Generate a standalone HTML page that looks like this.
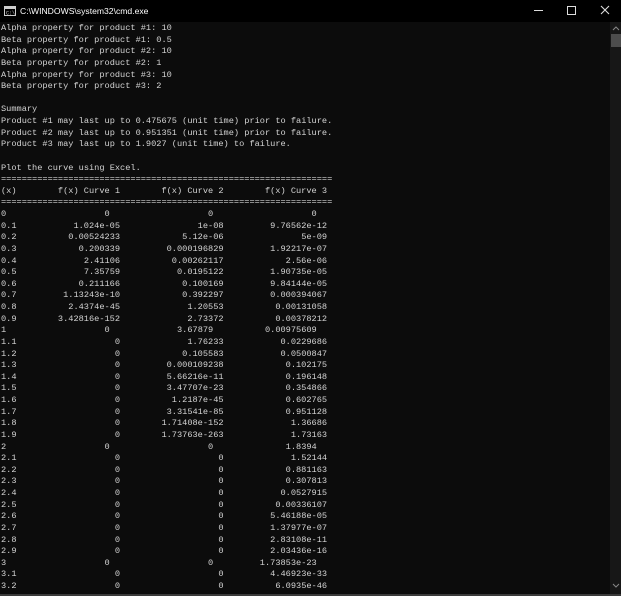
<!DOCTYPE html>
<html><head><meta charset="utf-8"><style>
html,body{margin:0;padding:0;width:621px;height:596px;overflow:hidden;background:#0c0c0c;}
#title{position:absolute;left:0;top:0;width:621px;height:22px;background:#000;color:#fff;font:8.6px "Liberation Sans",sans-serif;}
#title .t{position:absolute;left:20px;top:6px;}
#con{position:absolute;left:1px;top:23px;width:608px;height:571px;overflow:hidden;}
pre,.r{font-family:"Liberation Mono",monospace;font-size:8.65px;line-height:11.62px;color:#d4d4d4;margin:0;white-space:pre;}
.r b{display:inline-block;width:20ch;text-align:right;font-weight:normal;}
#sb{position:absolute;left:610px;top:22px;width:11px;height:572px;background:#171717;}
#thumb{position:absolute;left:1px;top:12px;width:10px;height:13px;background:#4d4d4d;}
#bot{position:absolute;left:0;top:594px;width:621px;height:2px;background:#3a3a3a;}
</style></head><body>
<div id="title">
<svg style="position:absolute;left:4px;top:6px" width="12" height="10"><rect x="0.5" y="0.5" width="11" height="9" fill="#000" stroke="#ccc"/><rect x="1" y="1" width="10" height="2" fill="#ccc"/><text x="2" y="8.5" font-size="5" fill="#ccc" font-family="Liberation Mono">C:\</text></svg>
<span class="t">C:\WINDOWS\system32\cmd.exe</span>
<div style="position:absolute;left:534px;top:10px;width:9px;height:1px;background:#ddd"></div>
<div style="position:absolute;left:567px;top:6px;width:7px;height:7px;border:1px solid #ddd"></div>
<svg style="position:absolute;left:600px;top:5px" width="10" height="10"><path d="M1 1L9 9M9 1L1 9" stroke="#ddd" stroke-width="1.1"/></svg>
</div>
<div id="con">
<pre>Alpha property for product #1: 10
Beta property for product #1: 0.5
Alpha property for product #2: 10
Beta property for product #2: 1
Alpha property for product #3: 10
Beta property for product #3: 2

Summary
Product #1 may last up to 0.475675 (unit time) prior to failure.
Product #2 may last up to 0.951351 (unit time) prior to failure.
Product #3 may last up to 1.9027 (unit time) to failure.

Plot the curve using Excel.
================================================================</pre>
<div class="r">(x)<b>f(x) Curve 1</b><b>f(x) Curve 2</b><b>f(x) Curve 3</b></div>
<pre>================================================================</pre>
<div class="r">0<b>0</b><b>0</b><b>0</b></div>
<div class="r">0.1<b>1.024e-05</b><b>1e-08</b><b>9.76562e-12</b></div>
<div class="r">0.2<b>0.00524233</b><b>5.12e-06</b><b>5e-09</b></div>
<div class="r">0.3<b>0.200339</b><b>0.000196829</b><b>1.92217e-07</b></div>
<div class="r">0.4<b>2.41106</b><b>0.00262117</b><b>2.56e-06</b></div>
<div class="r">0.5<b>7.35759</b><b>0.0195122</b><b>1.90735e-05</b></div>
<div class="r">0.6<b>0.211166</b><b>0.100169</b><b>9.84144e-05</b></div>
<div class="r">0.7<b>1.13243e-10</b><b>0.392297</b><b>0.000394067</b></div>
<div class="r">0.8<b>2.4374e-45</b><b>1.20553</b><b>0.00131058</b></div>
<div class="r">0.9<b>3.42816e-152</b><b>2.73372</b><b>0.00378212</b></div>
<div class="r">1<b>0</b><b>3.67879</b><b>0.00975609</b></div>
<div class="r">1.1<b>0</b><b>1.76233</b><b>0.0229686</b></div>
<div class="r">1.2<b>0</b><b>0.105583</b><b>0.0500847</b></div>
<div class="r">1.3<b>0</b><b>0.000109238</b><b>0.102175</b></div>
<div class="r">1.4<b>0</b><b>5.66216e-11</b><b>0.196148</b></div>
<div class="r">1.5<b>0</b><b>3.47707e-23</b><b>0.354866</b></div>
<div class="r">1.6<b>0</b><b>1.2187e-45</b><b>0.602765</b></div>
<div class="r">1.7<b>0</b><b>3.31541e-85</b><b>0.951128</b></div>
<div class="r">1.8<b>0</b><b>1.71408e-152</b><b>1.36686</b></div>
<div class="r">1.9<b>0</b><b>1.73763e-263</b><b>1.73163</b></div>
<div class="r">2<b>0</b><b>0</b><b>1.8394</b></div>
<div class="r">2.1<b>0</b><b>0</b><b>1.52144</b></div>
<div class="r">2.2<b>0</b><b>0</b><b>0.881163</b></div>
<div class="r">2.3<b>0</b><b>0</b><b>0.307813</b></div>
<div class="r">2.4<b>0</b><b>0</b><b>0.0527915</b></div>
<div class="r">2.5<b>0</b><b>0</b><b>0.00336107</b></div>
<div class="r">2.6<b>0</b><b>0</b><b>5.46188e-05</b></div>
<div class="r">2.7<b>0</b><b>0</b><b>1.37977e-07</b></div>
<div class="r">2.8<b>0</b><b>0</b><b>2.83108e-11</b></div>
<div class="r">2.9<b>0</b><b>0</b><b>2.03436e-16</b></div>
<div class="r">3<b>0</b><b>0</b><b>1.73853e-23</b></div>
<div class="r">3.1<b>0</b><b>0</b><b>4.46923e-33</b></div>
<div class="r">3.2<b>0</b><b>0</b><b>6.0935e-46</b></div>
</div>
<div id="sb">
<svg style="position:absolute;left:2px;top:4px" width="8" height="5"><path d="M1 4L4 1L7 4" stroke="#888" fill="none"/></svg>
<div id="thumb"></div>
<svg style="position:absolute;left:2px;top:561px" width="8" height="5"><path d="M1 1L4 4L7 1" stroke="#888" fill="none"/></svg>
</div>
<div id="bot"></div>
</body></html>
